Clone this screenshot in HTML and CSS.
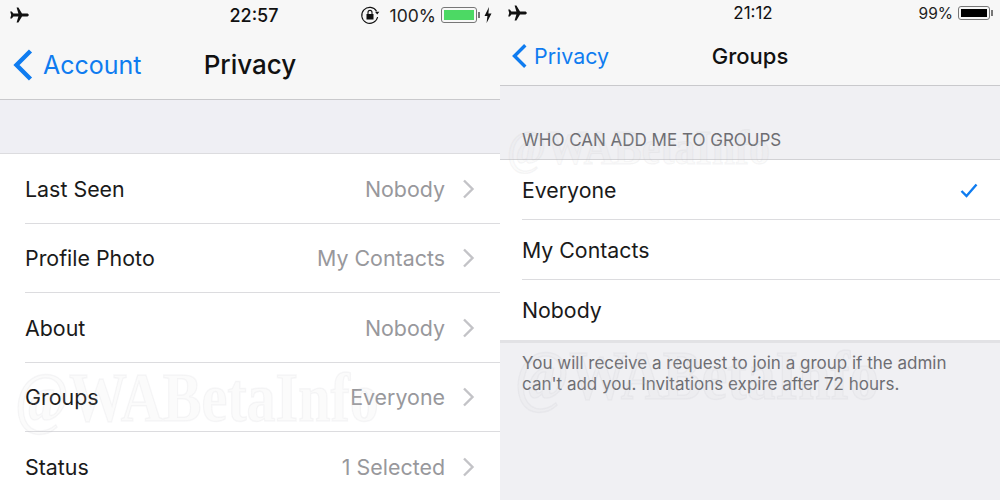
FILE: index.html
```html
<!DOCTYPE html>
<html>
<head>
  <title>Privacy and Groups</title>
  <link rel="stylesheet" href="styles.css">
</head>
<body>
  <div class="shots">
    <section class="phone phone-left">
      <header class="bar bar-left">
        <div class="status status-left">
          <svg class="plane" viewBox="0 0 20 16"><path d="M7.6 0.4 L9.4 0.4 L13 6.5 L17.6 6.5 C19 6.5 19.8 7.2 19.8 8 C19.8 8.8 19 9.5 17.6 9.5 L13 9.5 L9.4 15.6 L7.6 15.6 L9.4 9.5 L4.4 9.5 L2.8 11.6 L1.2 11.6 L2.2 8 L1.2 4.4 L2.8 4.4 L4.4 6.5 L9.4 6.5 Z"/></svg>
          <span class="clock">22:57</span>
          <div class="status-right">
            <svg class="lock" viewBox="0 0 20 20"><path d="M16.6 6.2 A8 8 0 1 0 17.6 12" fill="none" stroke="#111" stroke-width="1.1"/><path d="M15 6.8 L19.4 6.8 L17.2 9.6 Z" fill="#111"/><rect x="6.5" y="9" width="7" height="5.5" fill="#111"/><path d="M8 9 V7.4 A2 2 0 0 1 12 7.4 V9" fill="none" stroke="#111" stroke-width="1.1"/></svg>
            <span class="pct">100%</span>
            <span class="battery battery-green"><span class="battery-fill"></span></span>
            <svg class="bolt" viewBox="0 0 8 16"><path d="M5 0 L0.5 9 L3.4 9 L2.6 16 L7.5 6.4 L4.4 6.4 Z"/></svg>
          </div>
        </div>
        <nav class="nav nav-left">
          <a class="back">
            <svg class="chev" viewBox="0 0 22 34"><path d="M18.5 3 L4.5 17 L18.5 31" fill="none" stroke="#0f7cf0" stroke-width="4.4"/></svg>
            <span>Account</span>
          </a>
          <h1 class="title">Privacy</h1>
        </nav>
      </header>
      <div class="gap-left"></div>
      <ul class="list list-left">
        <li class="row"><span class="name">Last Seen</span><span class="val">Nobody</span><svg class="more" viewBox="0 0 13 20"><path d="M2 1.5 L10.5 10 L2 18.5"/></svg></li>
        <li class="row"><span class="name">Profile Photo</span><span class="val">My Contacts</span><svg class="more" viewBox="0 0 13 20"><path d="M2 1.5 L10.5 10 L2 18.5"/></svg></li>
        <li class="row"><span class="name">About</span><span class="val">Nobody</span><svg class="more" viewBox="0 0 13 20"><path d="M2 1.5 L10.5 10 L2 18.5"/></svg></li>
        <li class="row"><span class="name">Groups</span><span class="val">Everyone</span><svg class="more" viewBox="0 0 13 20"><path d="M2 1.5 L10.5 10 L2 18.5"/></svg></li>
        <li class="row"><span class="name">Status</span><span class="val">1 Selected</span><svg class="more" viewBox="0 0 13 20"><path d="M2 1.5 L10.5 10 L2 18.5"/></svg></li>
      </ul>
      <div class="mark mark-left">@WABetaInfo</div>
    </section>

    <section class="phone phone-right">
      <header class="bar bar-right">
        <div class="status status-small">
          <svg class="plane" viewBox="0 0 20 16"><path d="M7.6 0.4 L9.4 0.4 L13 6.5 L17.6 6.5 C19 6.5 19.8 7.2 19.8 8 C19.8 8.8 19 9.5 17.6 9.5 L13 9.5 L9.4 15.6 L7.6 15.6 L9.4 9.5 L4.4 9.5 L2.8 11.6 L1.2 11.6 L2.2 8 L1.2 4.4 L2.8 4.4 L4.4 6.5 L9.4 6.5 Z"/></svg>
          <span class="clock">21:12</span>
          <div class="status-right">
            <span class="pct">99%</span>
            <span class="battery battery-black"><span class="battery-fill"></span></span>
          </div>
        </div>
        <nav class="nav nav-right">
          <a class="back">
            <svg class="chev" viewBox="0 0 22 34"><path d="M18.5 3 L4.5 17 L18.5 31" fill="none" stroke="#0f7cf0" stroke-width="4.4"/></svg>
            <span>Privacy</span>
          </a>
          <h1 class="title">Groups</h1>
        </nav>
      </header>
      <h2 class="section-head">WHO CAN ADD ME TO GROUPS</h2>
      <ul class="list list-right">
        <li class="row"><span class="name">Everyone</span><svg class="tick" viewBox="0 0 18 15"><path d="M1.5 8 L6.5 13 L16.5 1.5"/></svg></li>
        <li class="row"><span class="name">My Contacts</span></li>
        <li class="row"><span class="name">Nobody</span></li>
      </ul>
      <p class="note">You will receive a request to join a group if the admin can't add you. Invitations expire after 72 hours.</p>
      <div class="mark mark-top">@WABetaInfo</div>
      <div class="mark mark-bottom">@WABetaInfo</div>
    </section>
  </div>
</body>
</html>
```

FILE: styles.css
```css
* {
  box-sizing: border-box;
}

body {
  margin: 0;
  font-family: Inter, "Liberation Sans", sans-serif;
  color: #111;
  overflow: hidden;
}

.shots {
  display: flex;
  width: 1000px;
  height: 500px;
  overflow: hidden;
}

.phone {
  position: relative;
  width: 500px;
  height: 500px;
  overflow: hidden;
  background: #f0f0f3;
}

.phone-left {
  background: #efeff4;
}

.bar {
  background: #f7f7f7;
  border-bottom: 1px solid #c9c9cc;
}

.bar-left {
  height: 100px;
}

.bar-right {
  height: 86px;
}

/* status bar */
.status {
  position: relative;
  display: flex;
  align-items: center;
  justify-content: space-between;
  height: 30px;
  padding: 0 8px 0 9px;
}

.status-small {
  padding: 0 7px 0 7px;
  height: 26px;
}

.plane {
  width: 20px;
  height: 16px;
  fill: #111;
}

.clock {
  position: absolute;
  left: 8px;
  right: 0;
  text-align: center;
  font-size: 18px;
  font-weight: 500;
}

.status-small .clock {
  left: 6px;
  font-size: 17px;
  font-weight: 400;
}

.status-right {
  position: relative;
  display: flex;
  align-items: center;
}

.lock {
  width: 20px;
  height: 20px;
  margin-right: 10px;
}

.pct {
  font-size: 17.5px;
  color: #222;
  margin-right: 5px;
}

.status-small .pct {
  font-size: 15.5px;
  margin-right: 5px;
}

.battery {
  position: relative;
  display: block;
  width: 36px;
  height: 16px;
  padding: 2px;
  border: 1px solid #777;
  border-radius: 3px;
}

.battery::after {
  content: "";
  position: absolute;
  right: -4px;
  top: 4px;
  width: 2px;
  height: 6px;
  background: #777;
}

.battery-fill {
  display: block;
  height: 100%;
}

.battery-green .battery-fill {
  background: #4cd964;
}

.battery-black {
  margin-right: 3px;
  width: 32px;
  height: 14px;
}

.battery-black::after {
  top: 3px;
}

.battery-black .battery-fill {
  background: #000;
}

.bolt {
  width: 8px;
  height: 16px;
  margin-left: 7px;
  fill: #111;
}

/* nav */
.nav {
  position: relative;
  display: flex;
  align-items: center;
}

.nav-left {
  height: 69px;
  padding-left: 12px;
}

.nav-right {
  height: 60px;
  padding-left: 11px;
}

.back {
  display: flex;
  align-items: center;
  color: #0f7cf0;
}

.nav-left .back {
  font-size: 25px;
  gap: 9px;
}

.nav-right .back {
  font-size: 21.4px;
  gap: 6px;
}

.chev {
  width: 22px;
  height: 34px;
}

.nav-right .chev {
  width: 17px;
  height: 28px;
}

.title {
  position: absolute;
  left: 0;
  right: 0;
  margin: 0;
  text-align: center;
  font-weight: 500;
  color: #111;
}

.nav-left .title {
  font-size: 26px;
}

.nav-right .title {
  font-size: 22px;
}

/* lists */
.gap-left {
  height: 53px;
}

.list {
  margin: 0;
  padding: 0;
  list-style: none;
  background: #fff;
}

.list-left {
  border-top: 1px solid #dcdcdf;
}

.list-left .row {
  height: 69.5px;
  padding: 0 25px 0 25px;
  font-size: 21.4px;
}

.row {
  position: relative;
  display: flex;
  align-items: center;
  color: #1a1a1a;
}

.row::after {
  content: "";
  position: absolute;
  left: 25px;
  right: 0;
  bottom: 0;
  height: 1px;
  background: #dcdcdf;
}

.row .name {
  flex: 1;
}

.row .val {
  color: #98989c;
  margin-right: 17px;
}

.more {
  width: 13px;
  height: 20px;
  fill: none;
  stroke: #c3c3c7;
  stroke-width: 2.4;
}

.section-head {
  height: 73px;
  margin: 0;
  padding: 44px 0 0 22px;
  font-size: 17px;
  font-weight: 400;
  color: #6d6d72;
}

.list-right {
  border-top: 1px solid #d2d2d5;
  border-bottom: 3px solid #e2e2e5;
}

.list-right .row {
  height: 60px;
  padding: 0 22px 0 22px;
  font-size: 21.3px;
}

.list-right .row::after {
  left: 22px;
}

.list-right .row:last-child::after {
  display: none;
}

.tick {
  width: 18px;
  height: 15px;
  fill: none;
  stroke: #0f7cf0;
  stroke-width: 2.4;
}

.note {
  margin: 0;
  padding: 10px 40px 0 22px;
  font-size: 17px;
  line-height: 21px;
  color: #6d6d72;
}

/* watermark over the screenshots */
.mark {
  position: absolute;
  font-family: "Liberation Serif", serif;
  font-weight: 700;
  white-space: nowrap;
  transform-origin: left center;
  color: rgba(215, 215, 220, 0.1);
  -webkit-text-stroke: 1.5px rgba(170, 170, 175, 0.09);
}

.mark-left {
  left: 15px;
  top: 358px;
  font-size: 70px;
  transform: scaleX(0.83);
}

.mark-top {
  left: 7px;
  top: 120px;
  font-size: 48px;
  transform: scaleX(0.875);
}

.mark-bottom {
  left: 15px;
  top: 336px;
  font-size: 70px;
  transform: scaleX(0.83);
}
```
